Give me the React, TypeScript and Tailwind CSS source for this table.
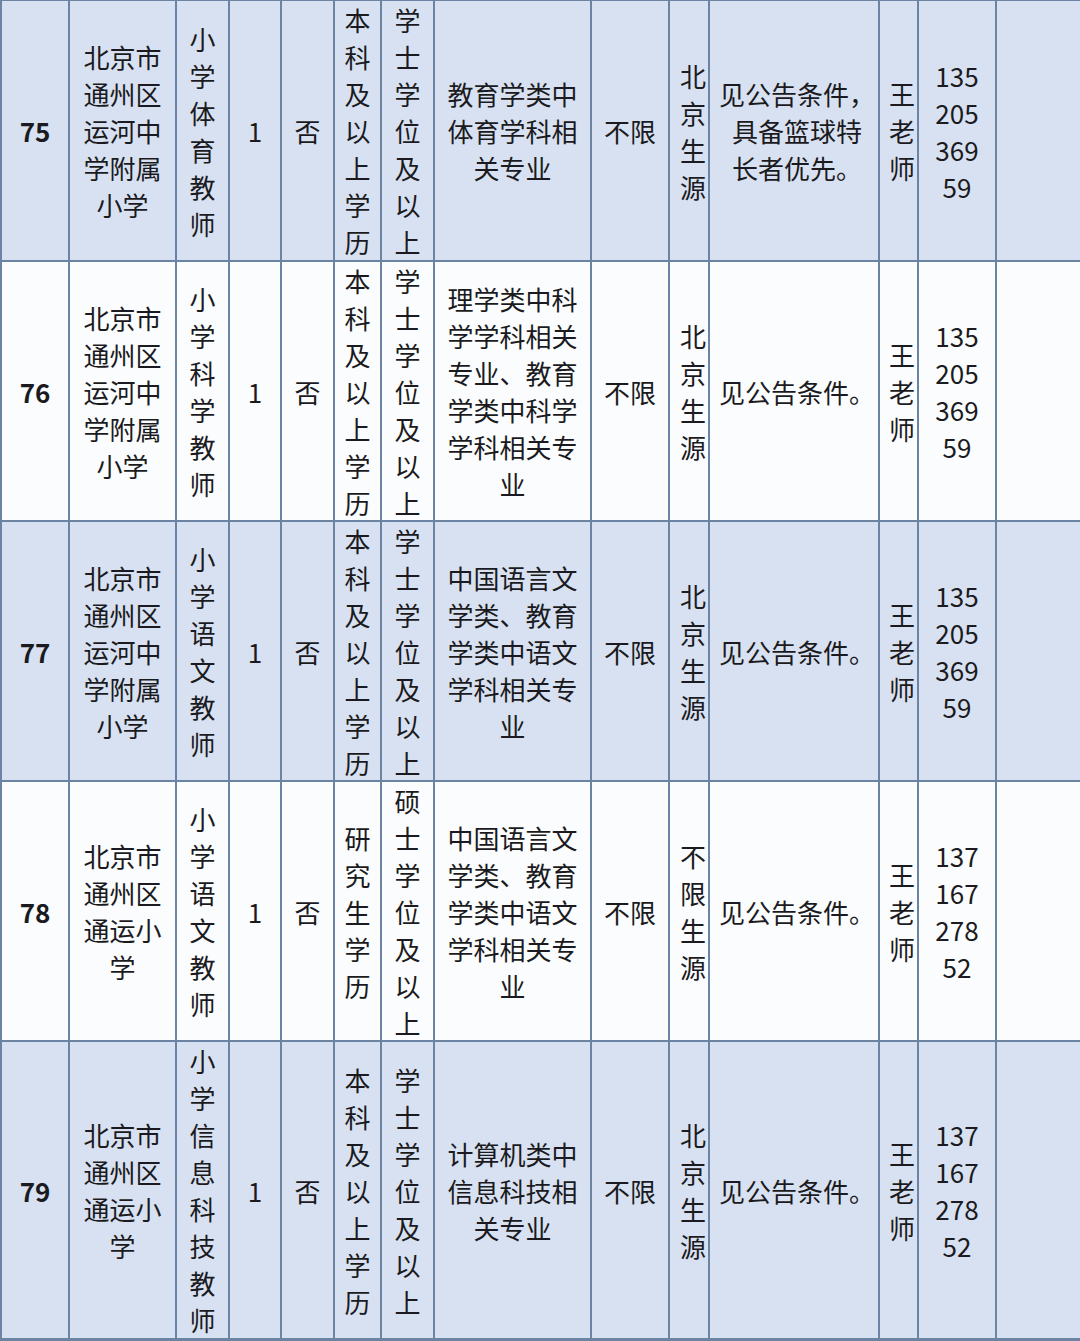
import React from 'react';

type Row = {
  no: string;
  school: string[];
  post: string;
  count: string;
  fixed: string;
  edu: string;
  degree: string;
  major: string[];
  age: string;
  origin: string;
  note: string[];
  contact: string;
  phone: string[];
  shaded: boolean;
};

const school75 = ['北京市', '通州区', '运河中', '学附属', '小学'];
const schoolTy = ['北京市', '通州区', '通运小', '学'];
const phoneA = ['135', '205', '369', '59'];
const phoneB = ['137', '167', '278', '52'];

const rows: Row[] = [
  {
    no: '75', school: school75, post: '小学体育教师', count: '1', fixed: '否',
    edu: '本科及以上学历', degree: '学士学位及以上',
    major: ['教育学类中', '体育学科相', '关专业'], age: '不限', origin: '北京生源',
    note: ['见公告条件，', '具备篮球特', '长者优先。'], contact: '王老师', phone: phoneA, shaded: true,
  },
  {
    no: '76', school: school75, post: '小学科学教师', count: '1', fixed: '否',
    edu: '本科及以上学历', degree: '学士学位及以上',
    major: ['理学类中科', '学学科相关', '专业、教育', '学类中科学', '学科相关专', '业'],
    age: '不限', origin: '北京生源', note: ['见公告条件。'], contact: '王老师', phone: phoneA, shaded: false,
  },
  {
    no: '77', school: school75, post: '小学语文教师', count: '1', fixed: '否',
    edu: '本科及以上学历', degree: '学士学位及以上',
    major: ['中国语言文', '学类、教育', '学类中语文', '学科相关专', '业'],
    age: '不限', origin: '北京生源', note: ['见公告条件。'], contact: '王老师', phone: phoneA, shaded: true,
  },
  {
    no: '78', school: schoolTy, post: '小学语文教师', count: '1', fixed: '否',
    edu: '研究生学历', degree: '硕士学位及以上',
    major: ['中国语言文', '学类、教育', '学类中语文', '学科相关专', '业'],
    age: '不限', origin: '不限生源', note: ['见公告条件。'], contact: '王老师', phone: phoneB, shaded: false,
  },
  {
    no: '79', school: schoolTy, post: '小学信息科技教师', count: '1', fixed: '否',
    edu: '本科及以上学历', degree: '学士学位及以上',
    major: ['计算机类中', '信息科技相', '关专业'],
    age: '不限', origin: '北京生源', note: ['见公告条件。'], contact: '王老师', phone: phoneB, shaded: true,
  },
];

const Cell: React.FC<{ lines: string[]; shaded: boolean; bold?: boolean; extra?: string }> = ({
  lines,
  shaded,
  bold,
  extra,
}) => (
  <div
    className={`flex flex-col items-center justify-center overflow-hidden text-center whitespace-nowrap ${
      shaded ? 'bg-[#d8e1f1]' : 'bg-[#fbfcfe]'
    } ${bold ? 'font-bold' : ''} ${extra ?? ''}`}
  >
    {lines.map((l, i) => (
      <div key={i}>{l}</div>
    ))}
  </div>
);

const vertical = (s: string) => s.split('');

export default function App() {
  return (
    <div
      className="w-[1080px] h-[1341px] bg-[#6c84a4] grid gap-[2px] pl-[2px] pt-[1px] pb-[3px] grid-cols-[66px_105px_51px_50px_51px_45px_51px_155px_76px_38px_168px_37px_76px_83px] grid-rows-[259px_258px_258px_258px_296px] text-[26px] leading-[37px] text-[#1a1a20]"
      style={{ fontFamily: '"Noto Sans CJK SC", "Noto Sans", sans-serif' }}
    >
      {rows.map((r) => (
        <React.Fragment key={r.no}>
          <Cell lines={[r.no]} shaded={r.shaded} bold />
          <Cell lines={r.school} shaded={r.shaded} />
          <Cell lines={vertical(r.post)} shaded={r.shaded} />
          <Cell lines={[r.count]} shaded={r.shaded} />
          <Cell lines={[r.fixed]} shaded={r.shaded} />
          <Cell lines={vertical(r.edu)} shaded={r.shaded} />
          <Cell lines={vertical(r.degree)} shaded={r.shaded} />
          <Cell lines={r.major} shaded={r.shaded} />
          <Cell lines={[r.age]} shaded={r.shaded} />
          <Cell lines={vertical(r.origin)} shaded={r.shaded} extra="pl-[8px]" />
          <Cell lines={r.note} shaded={r.shaded} extra="pl-[6px]" />
          <Cell lines={vertical(r.contact)} shaded={r.shaded} extra="pl-[7px]" />
          <Cell lines={r.phone} shaded={r.shaded} />
          <Cell lines={[]} shaded={r.shaded} />
        </React.Fragment>
      ))}
    </div>
  );
}
